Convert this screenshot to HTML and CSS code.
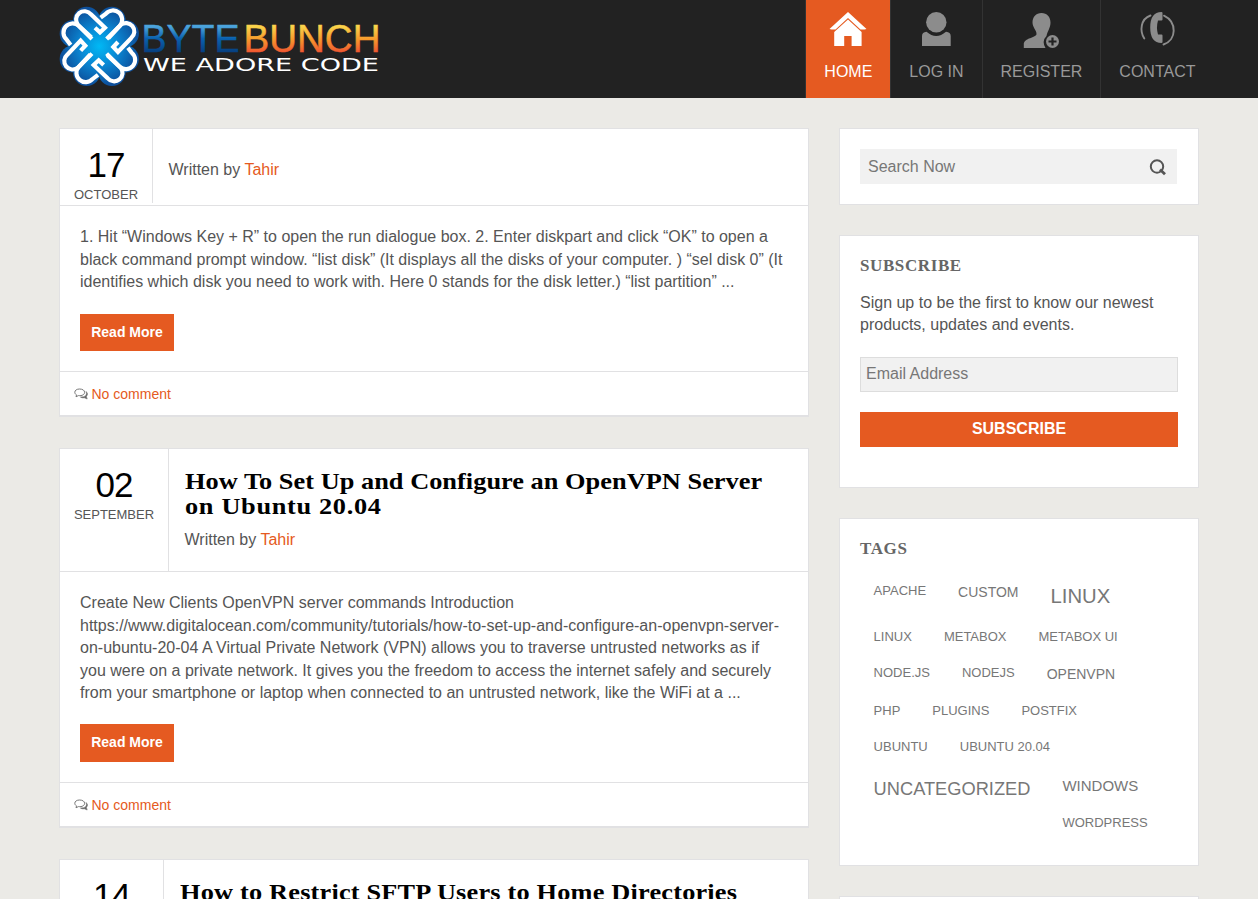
FILE: index.html
```html
<!DOCTYPE html>
<html lang="en">
<head>
<meta charset="utf-8">
<title>ByteBunch</title>
<link rel="stylesheet" href="styles.css">
</head>
<body>
<header class="top">
  <a class="logo">
    <svg width="322" height="84" viewBox="0 0 322 84">
      <defs>
        <radialGradient id="blue" gradientUnits="userSpaceOnUse" cx="0" cy="0" r="118">
          <stop offset="0" stop-color="#00b9f5"/><stop offset=".5" stop-color="#0a86d2"/><stop offset="1" stop-color="#0d4f9b"/>
        </radialGradient>
        <linearGradient id="byte" x1="0" y1="0" x2="0" y2="1">
          <stop offset=".2" stop-color="#4ba3dc"/><stop offset=".48" stop-color="#0a62b0"/><stop offset=".85" stop-color="#063a78"/>
        </linearGradient>
        <linearGradient id="bunch" x1="0" y1="0" x2="0" y2="1">
          <stop offset=".2" stop-color="#f9d34a"/><stop offset=".5" stop-color="#f79a2c"/><stop offset=".85" stop-color="#ee4d32"/>
        </linearGradient>
        <g id="petals">
          <circle cx="-38" cy="-78" r="41"/><circle cx="38" cy="-78" r="41"/>
        </g>
        <g id="hoops">
          <path d="M-24-27-64-64A25 25 0 0 1-25-96L17-56 2-42-13-56"/>
          <path d="M4-86 20-98A27 27 0 0 1 62-62L22-22"/>
        </g>
      </defs>
      <g transform="translate(40.3 42.3) scale(.333)">
        <g fill="url(#blue)">
          <circle r="82"/>
          <use href="#petals"/><use href="#petals" transform="rotate(90)"/><use href="#petals" transform="rotate(180)"/><use href="#petals" transform="rotate(270)"/>
        </g>
        <g fill="none" stroke="#fff" stroke-width="12.500">
          <use href="#hoops"/><use href="#hoops" transform="rotate(90)"/><use href="#hoops" transform="rotate(180)"/><use href="#hoops" transform="rotate(270)"/>
        </g>
      </g>
      <text class="word" x="82.500" y="48.300" textLength="98" lengthAdjust="spacingAndGlyphs" fill="url(#byte)" stroke="url(#byte)">BYTE</text>
      <text class="word" x="184.500" y="48.300" textLength="137" lengthAdjust="spacingAndGlyphs" fill="url(#bunch)" stroke="url(#bunch)">BUNCH</text>
      <text class="tagline" x="84" y="67" textLength="236" lengthAdjust="spacingAndGlyphs">WE ADORE CODE</text>
    </svg>
  </a>
  <nav class="nav">
    <a class="nav-item active">
      <svg width="38" height="36" viewBox="0 0 38 36"><path fill="#fff" d="M19 0 .5 17l2 .5h4L19 6l12.500 11.500h4l2-.5zM19 7.500 5.200 20v14h10V24h7.400v10h10V20z"/></svg>
      <span>HOME</span></a>
    <a class="nav-item">
      <svg width="32" height="36" viewBox="0 0 32 36"><circle cx="16.300" cy="10.200" r="10.200"/><path d="M2 34V24q0-4 4.500-4.300 9.700 8.500 19.500 0Q30.700 20 30.700 24v10z"/></svg>
      <span>LOG IN</span></a>
    <a class="nav-item">
      <svg width="36" height="36" viewBox="0 0 36 36"><path d="M18.500 1C13 1 9.500 5 9.500 10.500c0 5 4 7.500 4 11.500 0 4-12.700 3.500-12.700 10.500V36h21.700q-4-7 1-12c1-5 4-8 4-13.500C27.500 5 24 1 18.500 1z"/><circle cx="29.500" cy="29.500" r="6.500"/><path d="M25.500 29.500h8M29.500 25.500v8" stroke="#222" stroke-width="2.200"/></svg>
      <span>REGISTER</span></a>
    <a class="nav-item">
      <svg width="36" height="36" viewBox="0 0 36 36"><path d="M22.500 0q1 0 1 1v6.500q0 1-1 1H19q-2 7 0 14h3.500q1 0 1 1V30q0 1-1 1-11.300 0-11.300-15.500T22.500 0z"/><path fill="none" stroke="#8c8c8c" stroke-width="1.900" stroke-linecap="round" d="M11.500 3.500C1.500 7 .5 19 5.300 26.500M25 3.700C38 10 38 28 24.500 32.500"/></svg>
      <span>CONTACT</span></a>
  </nav>
</header>

<main class="page">
  <section class="posts">
    <article class="post">
      <div class="post-head untitled">
        <div class="date short"><b>17</b><span>OCTOBER</span></div>
        <div class="headline"><p class="byline">Written by <a>Tahir</a></p></div>
      </div>
      <div class="post-body">
        <p>1. Hit “Windows Key + R” to open the run dialogue box. 2. Enter diskpart and click “OK” to open a<br>black command prompt window. “list disk” (It displays all the disks of your computer. ) “sel disk 0” (It<br>identifies which disk you need to work with. Here 0 stands for the disk letter.) “list partition” ...</p>
        <a class="more">Read More</a>
      </div>
      <div class="post-foot">
        <svg width="14" height="12" viewBox="0 0 14 12"><path d="M9.500 8.800q4-1.300 2.600-5.300 2.800 2.300.3 5l.8 2.500-2.800-1.200q-2.800.4-4-.8z" fill="#666" stroke="#777" stroke-width=".6"/><path d="M5.500 1C2.800 1 .8 2.300.8 4.300c0 1.100.7 2 1.700 2.600L2 8.800l2.400-1.200c3.700.4 6.200-1 6.200-3.300C10.600 2.300 8.500 1 5.500 1z" fill="#fff" stroke="#777"/></svg>
        <a>No comment</a></div>
    </article>

    <article class="post">
      <div class="post-head">
        <div class="date"><b>02</b><span>SEPTEMBER</span></div>
        <div class="headline"><h2><span class="line-a">How To Set Up and Configure an OpenVPN Server</span><span class="line-b">on Ubuntu 20.04</span></h2><p class="byline">Written by <a>Tahir</a></p></div>
      </div>
      <div class="post-body long">
        <p>Create New Clients OpenVPN server commands Introduction<br>https://www.digitalocean.com/community/tutorials/how-to-set-up-and-configure-an-openvpn-server-<br>on-ubuntu-20-04 A Virtual Private Network (VPN) allows you to traverse untrusted networks as if<br>you were on a private network. It gives you the freedom to access the internet safely and securely<br>from your smartphone or laptop when connected to an untrusted network, like the WiFi at a ...</p>
        <a class="more">Read More</a>
      </div>
      <div class="post-foot">
        <svg width="14" height="12" viewBox="0 0 14 12"><path d="M9.500 8.800q4-1.300 2.600-5.300 2.800 2.300.3 5l.8 2.500-2.800-1.200q-2.800.4-4-.8z" fill="#666" stroke="#777" stroke-width=".6"/><path d="M5.500 1C2.800 1 .8 2.300.8 4.300c0 1.100.7 2 1.700 2.600L2 8.800l2.400-1.200c3.700.4 6.200-1 6.200-3.300C10.600 2.300 8.500 1 5.500 1z" fill="#fff" stroke="#777"/></svg>
        <a>No comment</a></div>
    </article>

    <article class="post">
      <div class="post-head">
        <div class="date third"><b>14</b></div>
        <div class="headline"><h2><span class="line-c">How to Restrict SFTP Users to Home Directories</span></h2></div>
      </div>
    </article>
  </section>

  <aside class="side">
    <section class="card search">
      <div class="search-box"><input type="text" placeholder="Search Now">
        <svg width="18" height="18" viewBox="0 0 18 18"><circle cx="8" cy="8.500" r="6.200" fill="none" stroke="#555" stroke-width="2"/><path d="m11 11.500 5 4.700" stroke="#555" stroke-width="2.800"/></svg></div>
    </section>
    <section class="card subscribe">
      <h3>SUBSCRIBE</h3>
      <p>Sign up to be the first to know our newest<br>products, updates and events.</p>
      <input class="email" type="text" placeholder="Email Address">
      <button class="submit">SUBSCRIBE</button>
    </section>
    <section class="card tags">
      <h3>TAGS</h3>
      <div class="tag-row"><a>APACHE</a><a class="m">CUSTOM</a><a class="xl">LINUX</a></div>
      <div class="tag-row"><a>LINUX</a><a>METABOX</a><a>METABOX UI</a></div>
      <div class="tag-row"><a>NODE.JS</a><a>NODEJS</a><a class="m">OPENVPN</a></div>
      <div class="tag-row"><a>PHP</a><a>PLUGINS</a><a>POSTFIX</a></div>
      <div class="tag-row"><a>UBUNTU</a><a>UBUNTU 20.04</a></div>
      <div class="tag-row"><a class="l">UNCATEGORIZED</a><div class="tag-stack"><a class="ml">WINDOWS</a><a>WORDPRESS</a></div></div>
    </section>
    <section class="card next"></section>
  </aside>
</main>
</body>
</html>
```
FILE: styles.css
```css
* { box-sizing: border-box; }
body {
  margin: 0;
  height: 899px;
  overflow: hidden;
  background: #ebeae6;
  color: #555;
  font: 16px/22.5px "Liberation Sans", Arial, sans-serif;
}
p, h2, h3 { margin: 0; }

.top { display: flex; justify-content: space-between; height: 98px; padding: 0 44.5px 0 59px; background: #222; }
.logo { padding-top: 4px; }
.logo svg { display: block; }
.word { font-size: 38px; stroke-width: .5px; }
.tagline { font-family: "DejaVu Sans", sans-serif; font-size: 18.5px; fill: #fff; }

.nav { display: flex; border-left: 1px solid #333; }
.nav-item {
  display: flex;
  flex-direction: column;
  align-items: center;
  gap: 13px;
  padding: 12px 18px 0;
  border-right: 1px solid #333;
  color: #999;
}
.nav-item:last-child { border-right: 0; }
.nav-item svg { fill: #8c8c8c; }
.active { background: #e55a21; color: #fff; }

.page { display: flex; gap: 30px; padding: 30px 59px 0; }
.posts { display: flex; flex-direction: column; gap: 31px; width: 750px; }
.post { background: #fff; border: 1px solid #e1e1e3; border-bottom-width: 2px; }
.post-head { display: flex; height: 123px; border-bottom: 1px solid #e1e1e3; }
.untitled { height: 77px; }
.date {
  display: flex;
  flex-direction: column;
  align-items: center;
  width: 109px;
  padding-top: 17px;
  border-right: 1px solid #e1e1e3;
}
.date b { margin-bottom: 1px; font-size: 35px; font-weight: 400; line-height: 37px; letter-spacing: -1px; color: #000; }
.date span { font-size: 13px; line-height: 22px; }
.short { width: 93px; height: 74px; }
.third { width: 104px; }
.headline { padding: 20px 0 0 15.5px; }
.untitled .headline { padding-top: 30px; }
.headline h2 {
  padding-bottom: 10px;
  font: bold 23.5px/25px "Liberation Serif", "Times New Roman", serif;
  color: #000;
  white-space: nowrap;
}
.headline h2 span { display: block; width: max-content; transform: scaleX(1.12); transform-origin: left; }
.line-a { letter-spacing: .03px; }
.line-b { letter-spacing: .6px; }
.line-c { letter-spacing: .17px; }
.post a { color: #e55a21; }

.post-body { padding: 20px; }
.post-body p { white-space: nowrap; }
.post .more {
  display: block;
  width: 94px;
  height: 37.5px;
  margin-top: 20px;
  background: #e55a21;
  color: #fff;
  font-size: 14px;
  font-weight: 700;
  line-height: 37px;
  text-align: center;
}
.post .long .more { height: 38px; margin-top: 19.5px; }
.post-foot {
  display: flex;
  align-items: center;
  gap: 3.5px;
  height: 44px;
  padding: 1px 0 0 14px;
  border-top: 1px solid #e1e1e3;
  font-size: 14px;
}

.side { display: flex; flex-direction: column; gap: 30px; width: 360px; }
.card { padding: 20px; background: #fff; border: 1px solid #e1e1e3; }
.search { height: 77px; }
.search-box { display: flex; align-items: center; width: 317px; height: 35px; padding: 0 10px 0 8px; background: #f1f1f1; }
.search-box input { flex: 1; padding: 2px 0 0; border: 0; background: none; font: inherit; }
input::placeholder { color: #777; }
.subscribe { height: 253px; }
.card h3 {
  font: bold 17px/20px "Liberation Serif", "Times New Roman", serif;
  letter-spacing: .6px;
  color: #666;
}
.subscribe h3 { margin-bottom: 15.5px; }
.email { display: block; width: 318px; height: 35px; margin: 20.5px 0 20px; padding: 0 5px 2px; border: 1px solid #ddd; background: #f1f1f1; font: inherit; }
.submit { display: block; width: 318px; height: 35px; padding: 0 0 2px; border: 0; background: #e55a21; color: #fff; font: bold 16px "Liberation Sans", Arial, sans-serif; }
.tags { height: 348px; }
.tags h3 { margin-bottom: 22.6px; }
.tag-row { display: flex; align-items: flex-start; gap: 32px; padding: 0 0 18px 13.6px; font-size: 13px; line-height: 1.4; color: #777; }
.tag-row .m { padding-top: 1px; font-size: 14px; line-height: 19px; }
.tag-row .l { padding-top: 1.5px; font-size: 18.25px; }
.tag-row .xl { font-size: 20.3px; line-height: 28.5px; }
.tag-stack { display: flex; flex-direction: column; gap: 18px; }
.tag-stack .ml { padding-top: .5px; font-size: 15px; }
.next { height: 60px; }
```
